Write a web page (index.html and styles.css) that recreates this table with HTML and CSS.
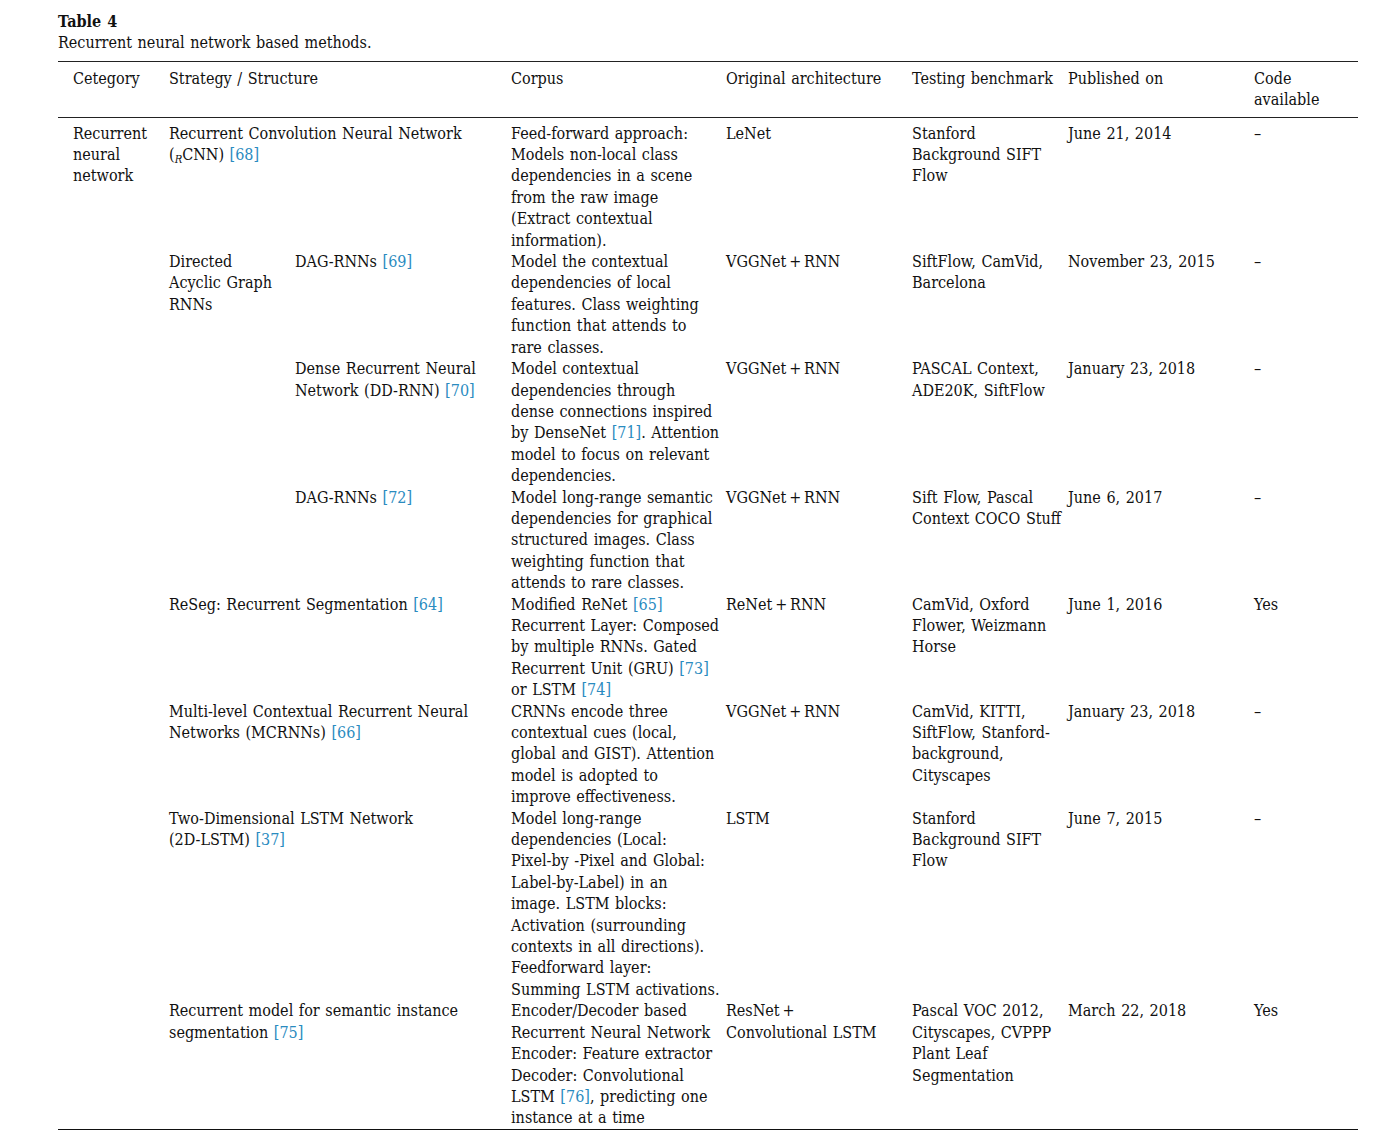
FILE: index.html
```html
<!DOCTYPE html>
<html lang="en">
<head>
<meta charset="utf-8">
<title>Table 4</title>
<link rel="stylesheet" href="styles.css">
</head>
<body>
<div class="table-wrap">
  <div class="caption-label">Table 4</div>
  <div class="caption-text">Recurrent neural network based methods.</div>
  <table class="methods">
    <colgroup>
      <col class="c1"><col class="c2"><col class="c3"><col class="c4"><col class="c5"><col class="c6"><col class="c7"><col class="c8">
    </colgroup>
    <thead>
      <tr>
        <th class="first">Cetegory</th>
        <th colspan="2">Strategy / Structure</th>
        <th>Corpus</th>
        <th>Original architecture</th>
        <th>Testing benchmark</th>
        <th>Published on</th>
        <th>Code<br>available</th>
      </tr>
    </thead>
    <tbody>
      <tr class="first-row">
        <td class="first" rowspan="8">Recurrent<br>neural<br>network</td>
        <td colspan="2">Recurrent Convolution Neural Network<br>(<sub class="sub"><i>R</i></sub>CNN) <a class="ref">[68]</a></td>
        <td>Feed-forward approach:<br>Models non-local class<br>dependencies in a scene<br>from the raw image<br>(Extract contextual<br>information).</td>
        <td>LeNet</td>
        <td>Stanford<br>Background SIFT<br>Flow</td>
        <td>June 21, 2014</td>
        <td>–</td>
      </tr>
      <tr>
        <td rowspan="3">Directed<br>Acyclic Graph<br>RNNs</td>
        <td>DAG-RNNs <a class="ref">[69]</a></td>
        <td>Model the contextual<br>dependencies of local<br>features. Class weighting<br>function that attends to<br>rare classes.</td>
        <td>VGGNet&#8201;+&#8201;RNN</td>
        <td>SiftFlow, CamVid,<br>Barcelona</td>
        <td>November 23, 2015</td>
        <td>–</td>
      </tr>
      <tr>
        <td>Dense Recurrent Neural<br>Network (DD-RNN) <a class="ref">[70]</a></td>
        <td>Model contextual<br>dependencies through<br>dense connections inspired<br>by DenseNet <a class="ref">[71]</a>. Attention<br>model to focus on relevant<br>dependencies.</td>
        <td>VGGNet&#8201;+&#8201;RNN</td>
        <td>PASCAL Context,<br>ADE20K, SiftFlow</td>
        <td>January 23, 2018</td>
        <td>–</td>
      </tr>
      <tr>
        <td>DAG-RNNs <a class="ref">[72]</a></td>
        <td>Model long-range semantic<br>dependencies for graphical<br>structured images. Class<br>weighting function that<br>attends to rare classes.</td>
        <td>VGGNet&#8201;+&#8201;RNN</td>
        <td>Sift Flow, Pascal<br>Context COCO Stuff</td>
        <td>June 6, 2017</td>
        <td>–</td>
      </tr>
      <tr>
        <td colspan="2">ReSeg: Recurrent Segmentation <a class="ref">[64]</a></td>
        <td>Modified ReNet <a class="ref">[65]</a><br>Recurrent Layer: Composed<br>by multiple RNNs. Gated<br>Recurrent Unit (GRU) <a class="ref">[73]</a><br>or LSTM <a class="ref">[74]</a></td>
        <td>ReNet&#8201;+&#8201;RNN</td>
        <td>CamVid, Oxford<br>Flower, Weizmann<br>Horse</td>
        <td>June 1, 2016</td>
        <td>Yes</td>
      </tr>
      <tr>
        <td colspan="2">Multi-level Contextual Recurrent Neural<br>Networks (MCRNNs) <a class="ref">[66]</a></td>
        <td>CRNNs encode three<br>contextual cues (local,<br>global and GIST). Attention<br>model is adopted to<br>improve effectiveness.</td>
        <td>VGGNet&#8201;+&#8201;RNN</td>
        <td>CamVid, KITTI,<br>SiftFlow, Stanford-<br>background,<br>Cityscapes</td>
        <td>January 23, 2018</td>
        <td>–</td>
      </tr>
      <tr>
        <td colspan="2">Two-Dimensional LSTM Network<br>(2D-LSTM) <a class="ref">[37]</a></td>
        <td>Model long-range<br>dependencies (Local:<br>Pixel-by -Pixel and Global:<br>Label-by-Label) in an<br>image. LSTM blocks:<br>Activation (surrounding<br>contexts in all directions).<br>Feedforward layer:<br>Summing LSTM activations.</td>
        <td>LSTM</td>
        <td>Stanford<br>Background SIFT<br>Flow</td>
        <td>June 7, 2015</td>
        <td>–</td>
      </tr>
      <tr>
        <td colspan="2">Recurrent model for semantic instance<br>segmentation <a class="ref">[75]</a></td>
        <td>Encoder/Decoder based<br>Recurrent Neural Network<br>Encoder: Feature extractor<br>Decoder: Convolutional<br>LSTM <a class="ref">[76]</a>, predicting one<br>instance at a time</td>
        <td>ResNet&#8201;+<br>Convolutional LSTM</td>
        <td>Pascal VOC 2012,<br>Cityscapes, CVPPP<br>Plant Leaf<br>Segmentation</td>
        <td>March 22, 2018</td>
        <td>Yes</td>
      </tr>
    </tbody>
  </table>
</div>
</body>
</html>
```

FILE: styles.css
```css
html, body {
  margin: 0;
  padding: 0;
  background: #ffffff;
}

body {
  font-family: "DejaVu Serif Condensed", "DejaVu Serif", "Liberation Serif", serif;
  font-stretch: condensed;
  font-size: 16px;
  line-height: 21.4px;
  word-spacing: 1px;
  color: #111111;
}

.table-wrap {
  padding: 11px 42px 0 58px;
}

.caption-label {
  font-weight: bold;
}

.caption-text {
  margin-bottom: 7px;
}

.methods {
  width: 1300px;
  table-layout: fixed;
  border-collapse: collapse;
  border-top: 1.4px solid #222222;
  border-bottom: 1.4px solid #111111;
}

.c1 { width: 111px; }
.c2 { width: 126px; }
.c3 { width: 216px; }
.c4 { width: 215px; }
.c5 { width: 186px; }
.c6 { width: 156px; }
.c7 { width: 186px; }
.c8 { width: 104px; }

.methods th,
.methods td {
  text-align: left;
  vertical-align: top;
  font-weight: normal;
  padding: 0;
  white-space: nowrap;
  overflow: visible;
}

.methods th {
  padding-top: 6px;
  padding-bottom: 6px;
}

.methods thead tr {
  border-bottom: 1.4px solid #222222;
}

.methods .first {
  padding-left: 15px;
}

.methods .first-row td {
  padding-top: 5px;
}

.ref {
  color: #2a8bbf;
  text-decoration: none;
}

.sub {
  font-size: 0.7em;
  line-height: 0;
  vertical-align: -0.25em;
}
```
